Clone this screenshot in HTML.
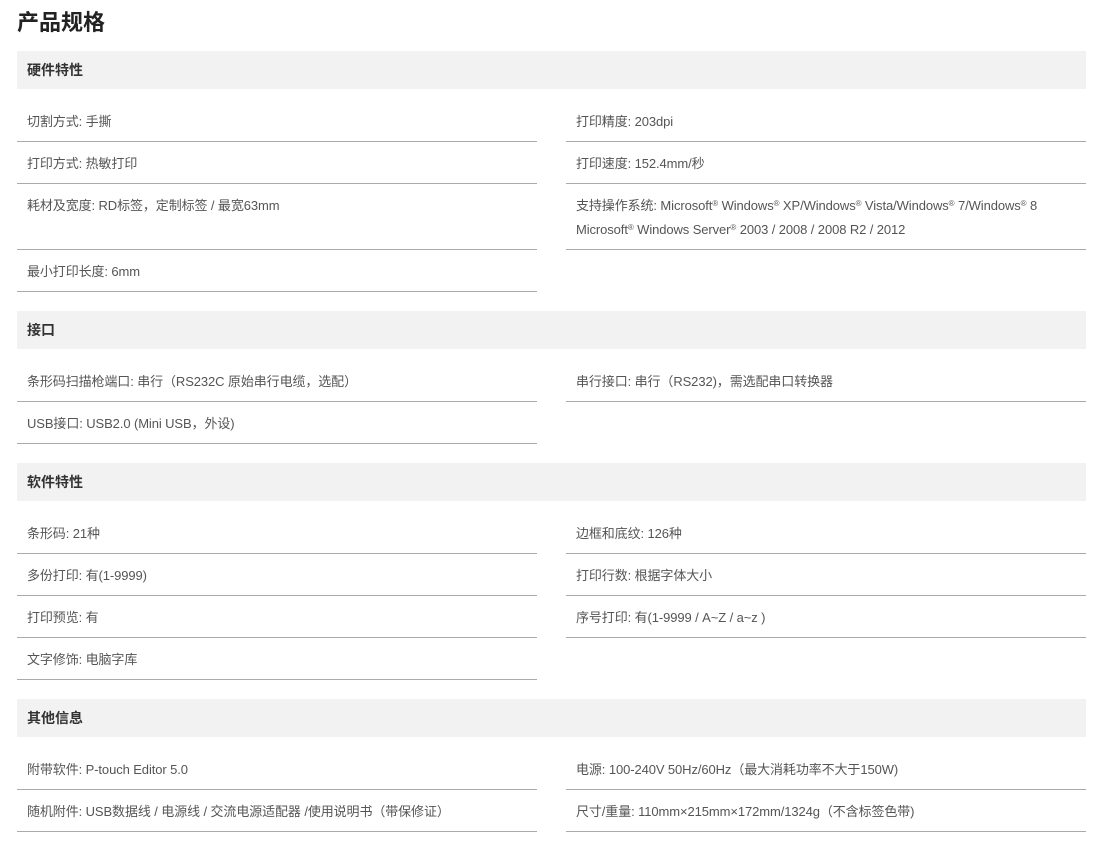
<!DOCTYPE html>
<html><head><meta charset="utf-8"><style>
*{margin:0;padding:0;box-sizing:border-box}
body{width:1112px;height:846px;background:#fff;font-family:"Liberation Sans","Noto Sans CJK SC",sans-serif;color:#555;overflow:hidden}
h1{position:absolute;left:17px;top:8px;font-size:22px;line-height:30px;color:#222;font-weight:bold}
.wrap{position:absolute;left:17px;top:51px;width:1069px}
.hd{height:38px;background:#f2f2f2;line-height:38px;padding-left:10px;font-size:14px;font-weight:bold;color:#333}
.cols{display:flex;justify-content:space-between;margin-top:11px;margin-bottom:19px}
.col{width:520px}
.r{padding:10px 10px 7px;line-height:24px;font-size:13px;border-bottom:1px solid #aaa;letter-spacing:-0.1px}
sup{font-size:8px;vertical-align:4px;line-height:0}
</style></head><body>
<h1>产品规格</h1>
<div class="wrap">
<div class="hd">硬件特性</div>
<div class="cols"><div class="col">
<div class="r">切割方式: 手撕</div>
<div class="r">打印方式: 热敏打印</div>
<div class="r">耗材及宽度: RD标签，定制标签 / 最宽63mm<br>&nbsp;</div>
<div class="r">最小打印长度: 6mm</div>
</div><div class="col">
<div class="r">打印精度: 203dpi</div>
<div class="r">打印速度: 152.4mm/秒</div>
<div class="r">支持操作系统: Microsoft<sup>®</sup> Windows<sup>®</sup> XP/Windows<sup>®</sup> Vista/Windows<sup>®</sup> 7/Windows<sup>®</sup> 8<br>Microsoft<sup>®</sup> Windows Server<sup>®</sup> 2003 / 2008 / 2008 R2 / 2012</div>
</div></div>
<div class="hd">接口</div>
<div class="cols"><div class="col">
<div class="r">条形码扫描枪端口: 串行（RS232C 原始串行电缆，选配）</div>
<div class="r">USB接口: USB2.0 (Mini USB，外设)</div>
</div><div class="col">
<div class="r">串行接口: 串行（RS232)，需选配串口转换器</div>
</div></div>
<div class="hd">软件特性</div>
<div class="cols"><div class="col">
<div class="r">条形码: 21种</div>
<div class="r">多份打印: 有(1-9999)</div>
<div class="r">打印预览: 有</div>
<div class="r">文字修饰: 电脑字库</div>
</div><div class="col">
<div class="r">边框和底纹: 126种</div>
<div class="r">打印行数: 根据字体大小</div>
<div class="r">序号打印: 有(1-9999 / A~Z / a~z )</div>
</div></div>
<div class="hd">其他信息</div>
<div class="cols"><div class="col">
<div class="r">附带软件: P-touch Editor 5.0</div>
<div class="r">随机附件: USB数据线 / 电源线 / 交流电源适配器 /使用说明书（带保修证）</div>
</div><div class="col">
<div class="r">电源: 100-240V 50Hz/60Hz（最大消耗功率不大于150W)</div>
<div class="r">尺寸/重量: 110mm×215mm×172mm/1324g（不含标签色带)</div>
</div></div>
</div>
</body></html>
